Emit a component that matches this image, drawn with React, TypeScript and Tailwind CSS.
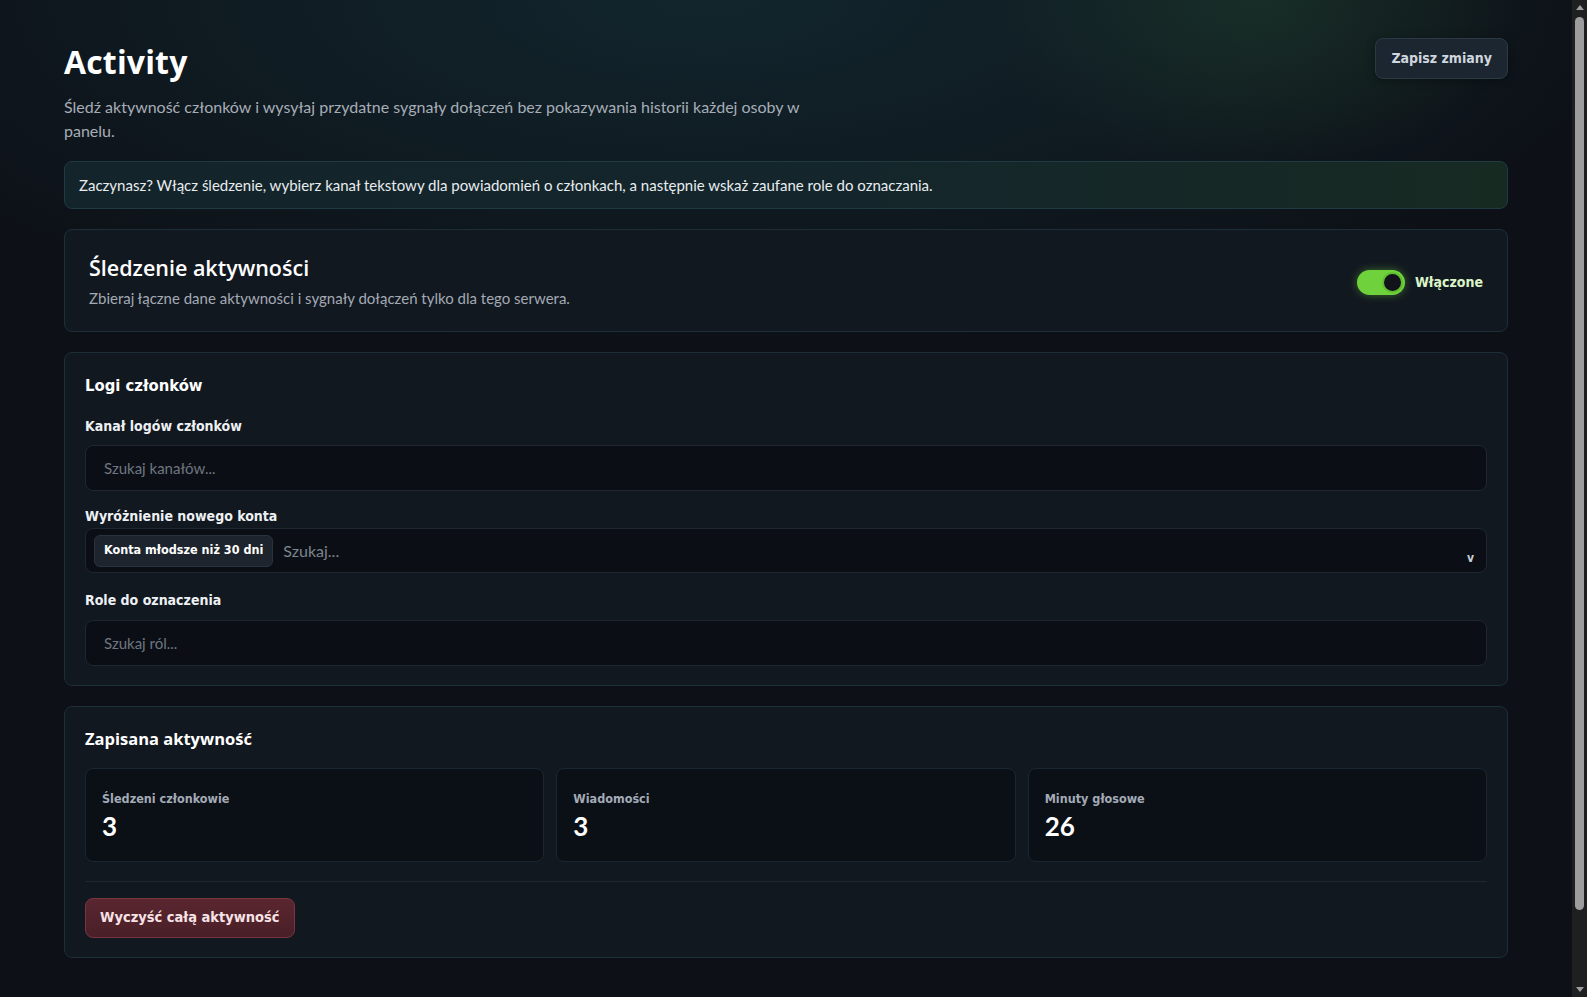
import React from "react";

const tah = "font-['DejaVu_Sans_Condensed','DejaVu_Sans',sans-serif] [font-stretch:condensed] font-bold";
const os = "font-['Open_Sans','Lato',sans-serif]";

function Stat({ label, value }: { label: string; value: string }) {
  return (
    <div className="flex h-[94px] flex-col rounded-lg border border-[#1a2731] bg-[#0b1017] px-4 pt-[22px]">
      <div className={`${tah} text-[12.5px] leading-4 text-[#a3abb6]`}>{label}</div>
      <div className="mt-[3px] text-[26px] font-bold leading-8 text-white">{value}</div>
    </div>
  );
}

function Scrollbar() {
  return (
    <div className="flex h-full w-[15px] shrink-0 flex-col items-center bg-[#1d1f21]">
      <div className="flex h-[15px] w-full items-center justify-center">
        <div className="h-0 w-0 border-x-[4px] border-b-[5px] border-x-transparent border-b-[#9e9e9e]" />
      </div>
      <div className="mt-[2px] h-[893px] w-[9px] rounded-full bg-[#9d9d9d]" />
      <div className="flex-1" />
      <div className="flex h-[15px] w-full items-center justify-center">
        <div className="h-0 w-0 border-x-[4px] border-t-[5px] border-x-transparent border-t-[#9e9e9e]" />
      </div>
    </div>
  );
}

export default function App() {
  return (
    <div className="flex h-screen w-full overflow-hidden bg-[#0d1117] font-['Lato','Open_Sans',sans-serif] text-[#e6e9ee]">
      <div className="h-full min-w-0 flex-1 overflow-hidden bg-[radial-gradient(ellipse_60%_35%_at_45%_0%,rgba(24,62,72,0.45),transparent),radial-gradient(ellipse_18%_18%_at_80%_0%,rgba(50,100,50,0.30),transparent)]">
        <div className="flex flex-col gap-5 px-16 pt-[38px] pb-[112px]">
          <div className="flex flex-col">
            <div className="flex items-start justify-between">
              <div className="max-w-[768px]">
                <h1 className={`${os} text-[32px] font-bold leading-[48px] tracking-[0.005em] text-white`}>Activity</h1>
                <p className="mt-[9px] text-[16px] leading-6 text-[#a7adb7]">
                  Śledź aktywność członków i wysyłaj przydatne sygnały dołączeń bez pokazywania historii każdej osoby w panelu.
                </p>
              </div>
              <button className={`${tah} h-[41px] rounded-lg border border-[#2c3945] bg-[#1c2630] px-[15px] text-[14px] text-[#cfd6de] shadow-[0_2px_8px_rgba(0,0,0,0.35)]`}>
                Zapisz zmiany
              </button>
            </div>
            <div className="mt-[18px] flex h-[48px] items-center rounded-lg border border-[#1f3a40] bg-[linear-gradient(90deg,#13242a,#14262b_55%,#172a22)] px-[14px] text-[15px] text-[#e8ecef]">
              Zaczynasz? Włącz śledzenie, wybierz kanał tekstowy dla powiadomień o członkach, a następnie wskaż zaufane role do oznaczania.
            </div>
          </div>

          <section className="flex h-[103px] items-center justify-between rounded-lg border border-[#1c2e38] bg-[#121820] px-6">
            <div className="flex flex-col">
              <h2 className={`${os} text-[21.5px] font-semibold leading-7 text-white`}>Śledzenie aktywności</h2>
              <p className="mt-[6px] text-[15px] leading-5 text-[#a3aab4]">
                Zbieraj łączne dane aktywności i sygnały dołączeń tylko dla tego serwera.
              </p>
            </div>
            <div className="flex items-center gap-[10px] pt-[3px]">
              <div className="flex h-[25px] w-[48px] items-center justify-end rounded-full bg-[#6fd13c] pr-[2px] shadow-[0_0_8px_rgba(111,209,60,0.45)]">
                <div className="h-[21px] w-[21px] rounded-full border-2 border-[#5fbf2f] bg-[#12121a]" />
              </div>
              <span className={`${tah} text-[14px] text-[#dcf5c8]`}>Włączone</span>
            </div>
          </section>

          <section className="flex flex-col rounded-lg border border-[#1c2e38] bg-[#121820] px-5 pt-[21px] pb-[19px]">
            <h3 className={`${tah} text-[16.5px] leading-6 text-white`}>Logi członków</h3>
            <label className={`${tah} mt-[18px] text-[14px] leading-5 text-[#eef1f4]`}>Kanał logów członków</label>
            <div className="mt-[9px] flex h-[46px] items-center rounded-lg border border-[#1f2731] bg-[#0b0f15] px-[18px] text-[15px] text-[#6f7680]">
              Szukaj kanałów...
            </div>
            <label className={`${tah} mt-[15px] text-[14px] leading-5 text-[#eef1f4]`}>Wyróżnienie nowego konta</label>
            <div className="mt-[2px] flex h-[45px] items-center rounded-lg border border-[#1f2731] bg-[#0b0f15] pl-[8px] pr-[12px]">
              <span className={`${tah} flex h-[32px] items-center rounded-md border border-[#2a323c] bg-[#1d242d] px-[9px] text-[12.5px] text-white`}>
                Konta młodsze niż 30 dni
              </span>
              <span className="ml-[10px] flex-1 text-[16px] text-[#7d848d]">Szukaj...</span>
              <span className={`${tah} mt-[14px] text-[12px] text-[#c9ced6]`}>v</span>
            </div>
            <label className={`${tah} mt-[17px] text-[14px] leading-5 text-[#eef1f4]`}>Role do oznaczenia</label>
            <div className="mt-[10px] flex h-[46px] items-center rounded-lg border border-[#1f2731] bg-[#0b0f15] px-[18px] text-[15px] text-[#6f7680]">
              Szukaj ról...
            </div>
          </section>

          <section className="flex flex-col rounded-lg border border-[#1c2e38] bg-[#121820] px-5 pt-[20px] pb-[19px]">
            <h3 className={`${os} text-[16.5px] font-bold leading-6 text-white`}>Zapisana aktywność</h3>
            <div className="mt-[17px] grid grid-cols-3 gap-3">
              <Stat label="Śledzeni członkowie" value="3" />
              <Stat label="Wiadomości" value="3" />
              <Stat label="Minuty głosowe" value="26" />
            </div>
            <div className="mt-[19px] h-px bg-[#1f2831]" />
            <div className="mt-[16px]">
              <button className={`${tah} h-[40px] rounded-lg border border-[#7a3440] bg-[linear-gradient(180deg,#5a2630,#4a1f27)] px-[14px] text-[14.5px] text-[#f7e3e6]`}>
                Wyczyść całą aktywność
              </button>
            </div>
          </section>
        </div>
      </div>
      <Scrollbar />
    </div>
  );
}
